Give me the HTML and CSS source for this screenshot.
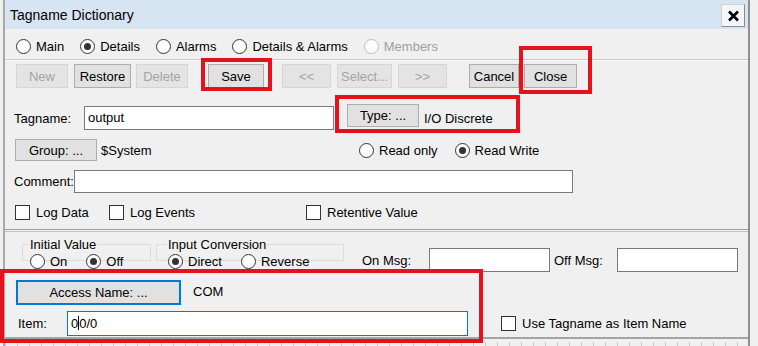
FILE: index.html
```html
<!DOCTYPE html>
<html lang="en">
<head>
    <meta charset="UTF-8">
    <title>Tagname Dictionary</title>
    <link rel="stylesheet" href="styles.css">
</head>
<body>
    <div class="window">
        <div class="titlebar">
            <span class="title">Tagname Dictionary</span>
            <div class="close-x">
                <svg width="13" height="12" viewBox="0 0 13 12"><path d="M2 1.5 L11 10.5 M11 1.5 L2 10.5" stroke="#000" stroke-width="2.6" fill="none"/></svg>
            </div>
        </div>

        <div class="upper">
            <div class="tabs">
                <label class="opt"><span class="radio"></span>Main</label>
                <label class="opt"><span class="radio on"></span>Details</label>
                <label class="opt"><span class="radio"></span>Alarms</label>
                <label class="opt"><span class="radio"></span>Details &amp; Alarms</label>
                <label class="opt disabled"><span class="radio"></span>Members</label>
            </div>
            <div class="separator"></div>

            <div class="toolbar">
                <button class="btn off w-new">New</button>
                <button class="btn w-restore">Restore</button>
                <button class="btn off w-delete">Delete</button>
                <button class="btn w-save">Save</button>
                <button class="btn off w-prev">&lt;&lt;</button>
                <button class="btn off w-select">Select...</button>
                <button class="btn off w-next">&gt;&gt;</button>
                <button class="btn w-cancel">Cancel</button>
                <button class="btn w-close">Close</button>
            </div>

            <div class="row tag-row">
                <span class="lbl lbl-tag">Tagname:</span>
                <div class="field tag-input">output</div>
                <button class="btn type-btn">Type: ...</button>
                <span class="value">I/O Discrete</span>
            </div>

            <div class="row group-row">
                <button class="btn group-btn">Group: ...</button>
                <span class="value">$System</span>
                <label class="opt read-only"><span class="radio"></span>Read only</label>
                <label class="opt"><span class="radio on"></span>Read Write</label>
            </div>

            <div class="row comment-row">
                <span class="lbl lbl-comment">Comment:</span>
                <div class="field comment-input"></div>
            </div>

            <div class="row check-row">
                <label class="opt log-data"><span class="check"></span>Log Data</label>
                <label class="opt log-events"><span class="check"></span>Log Events</label>
                <label class="opt"><span class="check"></span>Retentive Value</label>
            </div>
        </div>

        <div class="lower">
            <div class="row groups-row">
                <fieldset class="gbox gbox-initial">
                    <legend>Initial Value</legend>
                    <div class="gbox-opts">
                        <label class="opt"><span class="radio"></span>On</label>
                        <label class="opt"><span class="radio on"></span>Off</label>
                    </div>
                </fieldset>
                <fieldset class="gbox gbox-conv">
                    <legend>Input Conversion</legend>
                    <div class="gbox-opts">
                        <label class="opt"><span class="radio on"></span>Direct</label>
                        <label class="opt"><span class="radio"></span>Reverse</label>
                    </div>
                </fieldset>
                <div class="msg">
                    <span class="lbl lbl-on">On Msg:</span>
                    <div class="field msg-input"></div>
                    <span class="lbl lbl-off">Off Msg:</span>
                    <div class="field msg-input"></div>
                </div>
            </div>

            <div class="row access-row">
                <button class="btn focus access-btn">Access Name: ...</button>
                <span class="value">COM</span>
            </div>

            <div class="row item-row">
                <span class="lbl lbl-item">Item:</span>
                <div class="field focus item-input">0<span class="caret"></span>0/0</div>
                <label class="opt use-tag"><span class="check"></span>Use Tagname as Item Name</label>
            </div>
        </div>
        <div class="ticks"></div>
    </div>

    <!-- red highlight frames drawn over the dialog -->
    <div class="mark mark-save"></div>
    <div class="mark mark-close"></div>
    <div class="mark mark-type"></div>
    <div class="mark mark-access"></div>
</body>
</html>
```

FILE: styles.css
```css
body {
    margin: 0;
    width: 758px;
    height: 346px;
    overflow: hidden;
    background-color: #f0f0f0;
    font-family: "Liberation Sans", Arial, sans-serif;
    font-size: 13px;
    color: #000;
}

.window {
    margin-left: 3px;
    width: 743px;
    border-left: 2px solid #a9a9a9;
    border-right: 2px solid #8f8f8f;
    background-color: #f0f0f0;
}

.titlebar {
    height: 29px;
    background-color: #d7e4f2;
    display: flex;
    align-items: center;
    justify-content: space-between;
    padding-left: 5px;
    padding-right: 3px;
}

.title {
    font-size: 14px;
}

.close-x {
    width: 22px;
    height: 21px;
    margin-top: 2px;
    background-color: #f4f6f9;
    border: 1px solid #d0d0d0;
    border-right-color: #8c8c8c;
    border-bottom-color: #8c8c8c;
    display: flex;
    align-items: center;
    justify-content: center;
}

/* radios and checkboxes */
.opt {
    display: flex;
    align-items: center;
    white-space: nowrap;
}

.opt.disabled {
    color: #a0a0a0;
}

.radio {
    width: 13px;
    height: 13px;
    border: 1px solid #333;
    border-radius: 50%;
    background-color: #fff;
    margin-right: 5px;
    display: flex;
    align-items: center;
    justify-content: center;
}

.disabled .radio {
    border-color: #bcbcbc;
}

.radio.on::after {
    content: "";
    width: 7px;
    height: 7px;
    border-radius: 50%;
    background-color: #333;
}

.check {
    width: 13px;
    height: 13px;
    border: 1px solid #333;
    background-color: #fff;
    margin-right: 6px;
}

/* upper panel */
.upper {
    border-bottom: 1px solid #9f9f9f;
    padding-bottom: 10px;
}

.tabs {
    display: flex;
    align-items: center;
    gap: 16px;
    height: 20px;
    margin-top: 7px;
    padding-left: 11px;
}

.separator {
    height: 1px;
    margin-top: 3px;
    background-color: #c9c9c9;
    border-bottom: 1px solid #fbfbfb;
}

.btn {
    font-family: inherit;
    font-size: 13px;
    color: #000;
    height: 24px;
    padding: 0;
    background-color: #e1e1e1;
    border: 1px solid #adadad;
    white-space: nowrap;
}

.btn.off {
    color: #a3a3a3;
    background-color: #e4e4e4;
    border-color: #d6d6d6;
}

.btn.focus {
    border: 2px solid #0078d7;
}

.toolbar {
    display: flex;
    margin-top: 3px;
    padding-left: 11px;
}

.w-new { width: 52px; }
.w-restore { width: 57px; margin-left: 6px; }
.w-delete { width: 52px; margin-left: 5px; }
.w-save { width: 56px; margin-left: 20px; }
.w-prev { width: 49px; margin-left: 18px; }
.w-select { width: 55px; margin-left: 6px; }
.w-next { width: 49px; margin-left: 6px; }
.w-cancel { width: 50px; margin-left: 22px; }
.w-close { width: 53px; margin-left: 5px; }

.row {
    display: flex;
    align-items: center;
}

.field {
    background-color: #fff;
    border: 1px solid #7a7a7a;
    height: 22px;
    line-height: 22px;
    padding-left: 3px;
    box-sizing: content-box;
}

.field.focus {
    border-color: #0078d7;
}

.tag-row {
    margin-top: 18px;
    height: 24px;
    padding-left: 9px;
}

.lbl-tag { width: 70px; }
.tag-input { width: 245px; }

.type-btn {
    width: 72px;
    height: 23px;
    margin-left: 13px;
    margin-bottom: 5px;
}

.tag-row .value {
    margin-left: 5px;
}

.group-row {
    margin-top: 9px;
    height: 22px;
    padding-left: 10px;
}

.group-btn {
    width: 82px;
    height: 22px;
}

.group-row .value {
    width: 258px;
    margin-left: 4px;
}

.read-only {
    margin-right: 17px;
}

.comment-row {
    margin-top: 9px;
    height: 23px;
    padding-left: 9px;
}

.lbl-comment { width: 60px; }

.comment-input {
    width: 494px;
    height: 21px;
}

.check-row {
    margin-top: 12px;
    height: 14px;
    padding-left: 10px;
}

.log-data { width: 94px; }
.log-events { width: 197px; }

/* lower panel */
.lower {
    margin-top: 1px;
    border-top: 1px solid #c4c4c4;
    border-bottom: 2px solid #a4a4a4;
    padding-top: 5px;
    padding-bottom: 1px;
}

.groups-row {
    align-items: flex-start;
    padding-left: 17px;
}

.gbox {
    margin: 0;
    padding: 0 0 2px 6px;
    border: 1px solid #dcdcdc;
    height: 20px;
}

.gbox legend {
    padding: 0 1px;
    line-height: 15px;
}

.gbox-initial { width: 121px; }

.gbox-conv {
    width: 176px;
    margin-left: 5px;
    padding-left: 10px;
}

.gbox-opts {
    display: flex;
    gap: 19px;
    margin-top: 2px;
    padding-left: 1px;
}

.msg {
    display: flex;
    align-items: center;
    margin-top: 11px;
    margin-left: 18px;
}

.lbl-on { width: 67px; }
.lbl-off { width: 63px; margin-left: 4px; }

.msg-input {
    width: 116px;
    height: 22px;
}

.access-row {
    margin-top: 8px;
    padding-left: 11px;
}

.access-btn {
    width: 165px;
    height: 25px;
}

.access-row .value {
    margin-left: 12px;
    margin-top: -2px;
}

.item-row {
    margin-top: 6px;
    padding-left: 13px;
}

.lbl-item { width: 49px; }

.item-input {
    width: 396px;
    height: 23px;
    line-height: 23px;
}

.caret {
    display: inline-block;
    width: 0;
    height: 14px;
    border-left: 1px solid #000;
    vertical-align: -2px;
}

.use-tag {
    margin-left: 33px;
}

.ticks {
    height: 4px;
    margin-top: 3px;
    background-image: repeating-linear-gradient(90deg, #c8c8c8 0 1px, transparent 1px 12px);
}

/* red highlight frames */
.mark {
    position: absolute;
    border: 4px solid #e3121c;
    box-sizing: border-box;
}

.mark-save { left: 201px; top: 58px; width: 71px; height: 33px; }
.mark-close { left: 519px; top: 46px; width: 73px; height: 48px; }
.mark-type { left: 335px; top: 95px; width: 185px; height: 38px; }
.mark-access { left: 0; top: 269px; width: 483px; height: 74px; }
```
